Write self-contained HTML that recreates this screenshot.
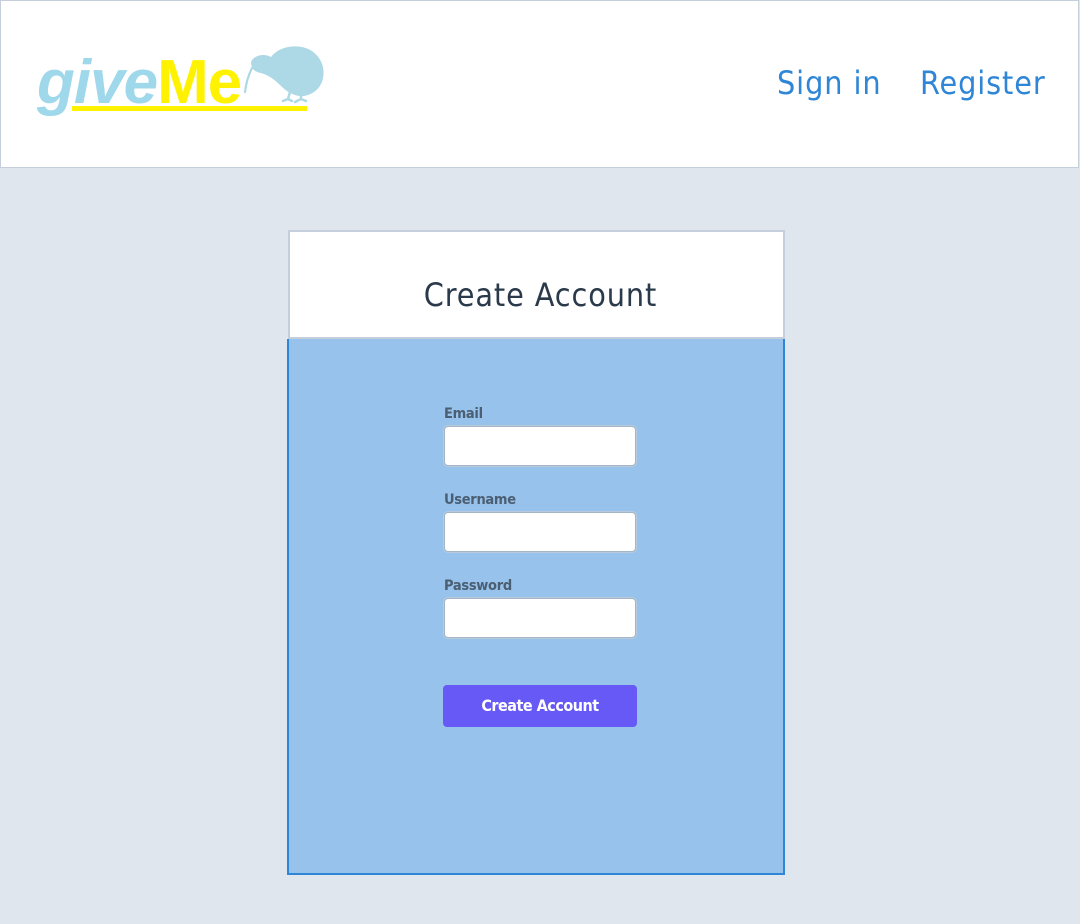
<!DOCTYPE html>
<html><head><meta charset="utf-8"><style>
*{box-sizing:border-box;margin:0;padding:0}
body{width:1080px;height:924px;background:#dfe6ee;font-family:"DejaVu Sans","Liberation Sans",sans-serif;position:relative;overflow:hidden}
.hdr{position:absolute;left:0;top:0;width:1079px;height:168px;background:#fff;border:1px solid #c4cfdb}
.nav{position:absolute;top:64px;font-size:32px;color:#2f86d6;font-family:"DejaVu Sans Condensed","DejaVu Sans",sans-serif;letter-spacing:0.9px}
.logo{position:absolute;left:37px;top:52px;font-family:"Liberation Sans",sans-serif;font-weight:bold;font-size:62px;line-height:62px}
.card-h{position:absolute;left:288px;top:230px;width:497px;height:109px;background:#fff;border:2px solid #c4cfdb;text-align:center}
.card-h div{position:absolute;left:8px;right:0;top:44px;font-size:32px;color:#2a3a4a;font-family:"DejaVu Sans Condensed","DejaVu Sans",sans-serif;letter-spacing:0.9px}
.card-b{position:absolute;left:287px;top:339px;width:498px;height:536px;background:#96c2eb;border:2px solid #2f86d6;border-top:none}
.lbl{position:absolute;left:444px;font-size:14.5px;font-weight:bold;color:#4b5e72;font-family:"DejaVu Sans Condensed","DejaVu Sans",sans-serif;letter-spacing:-0.3px}
.inp{position:absolute;left:444px;width:192px;height:40px;background:#fff;border:1px solid #a2b6c8;border-radius:4px;box-shadow:0 0 0 1px #b8cadb}
.btn{position:absolute;left:443px;top:685px;width:194px;height:42px;background:#6759f5;border-radius:4px;color:#fff;font-weight:bold;font-size:16px;text-align:center;line-height:42px;font-family:"DejaVu Sans Condensed","DejaVu Sans",sans-serif;letter-spacing:-0.5px}
</style></head><body>
<div class="hdr"></div>
<div style="position:absolute;left:72px;top:106px;width:235px;height:5px;background:#fff200"></div>
<div class="logo"><span style="color:#9fd8ea;font-style:italic;letter-spacing:-1px">give</span><span style="color:#fff200;letter-spacing:-1px">Me</span></div>
<svg style="position:absolute;left:230px;top:38px" width="100" height="76" viewBox="0 0 100 76">
<path d="M21 24 C24 17 34 15 41 19 C48 10 60 7 72 9 C87 12 96 26 93 40 C91 50 84 56 74 58 C64 59 56 53 50 47 C44 41 38 37 31 35 C25 34 21 31 21 24 Z" fill="#add8e6"/>
<path d="M22 30 C18 38 16 45 15 54" stroke="#add8e6" stroke-width="2.2" fill="none" stroke-linecap="round"/>
<path d="M60 54 L58 61 L53 63 M58 61 L62 63 M71 55 L71 61 L65 64 M71 61 L76 63" stroke="#add8e6" stroke-width="2.5" fill="none" stroke-linecap="round"/>
</svg>
<div class="nav" style="left:777px">Sign in</div>
<div class="nav" style="left:920px">Register</div>
<div class="card-h"><div>Create Account</div></div>
<div class="card-b"></div>
<div class="lbl" style="top:406px">Email</div>
<div class="inp" style="top:426px"></div>
<div class="lbl" style="top:492px">Username</div>
<div class="inp" style="top:512px"></div>
<div class="lbl" style="top:578px">Password</div>
<div class="inp" style="top:598px"></div>
<div class="btn">Create Account</div>
</body></html>
